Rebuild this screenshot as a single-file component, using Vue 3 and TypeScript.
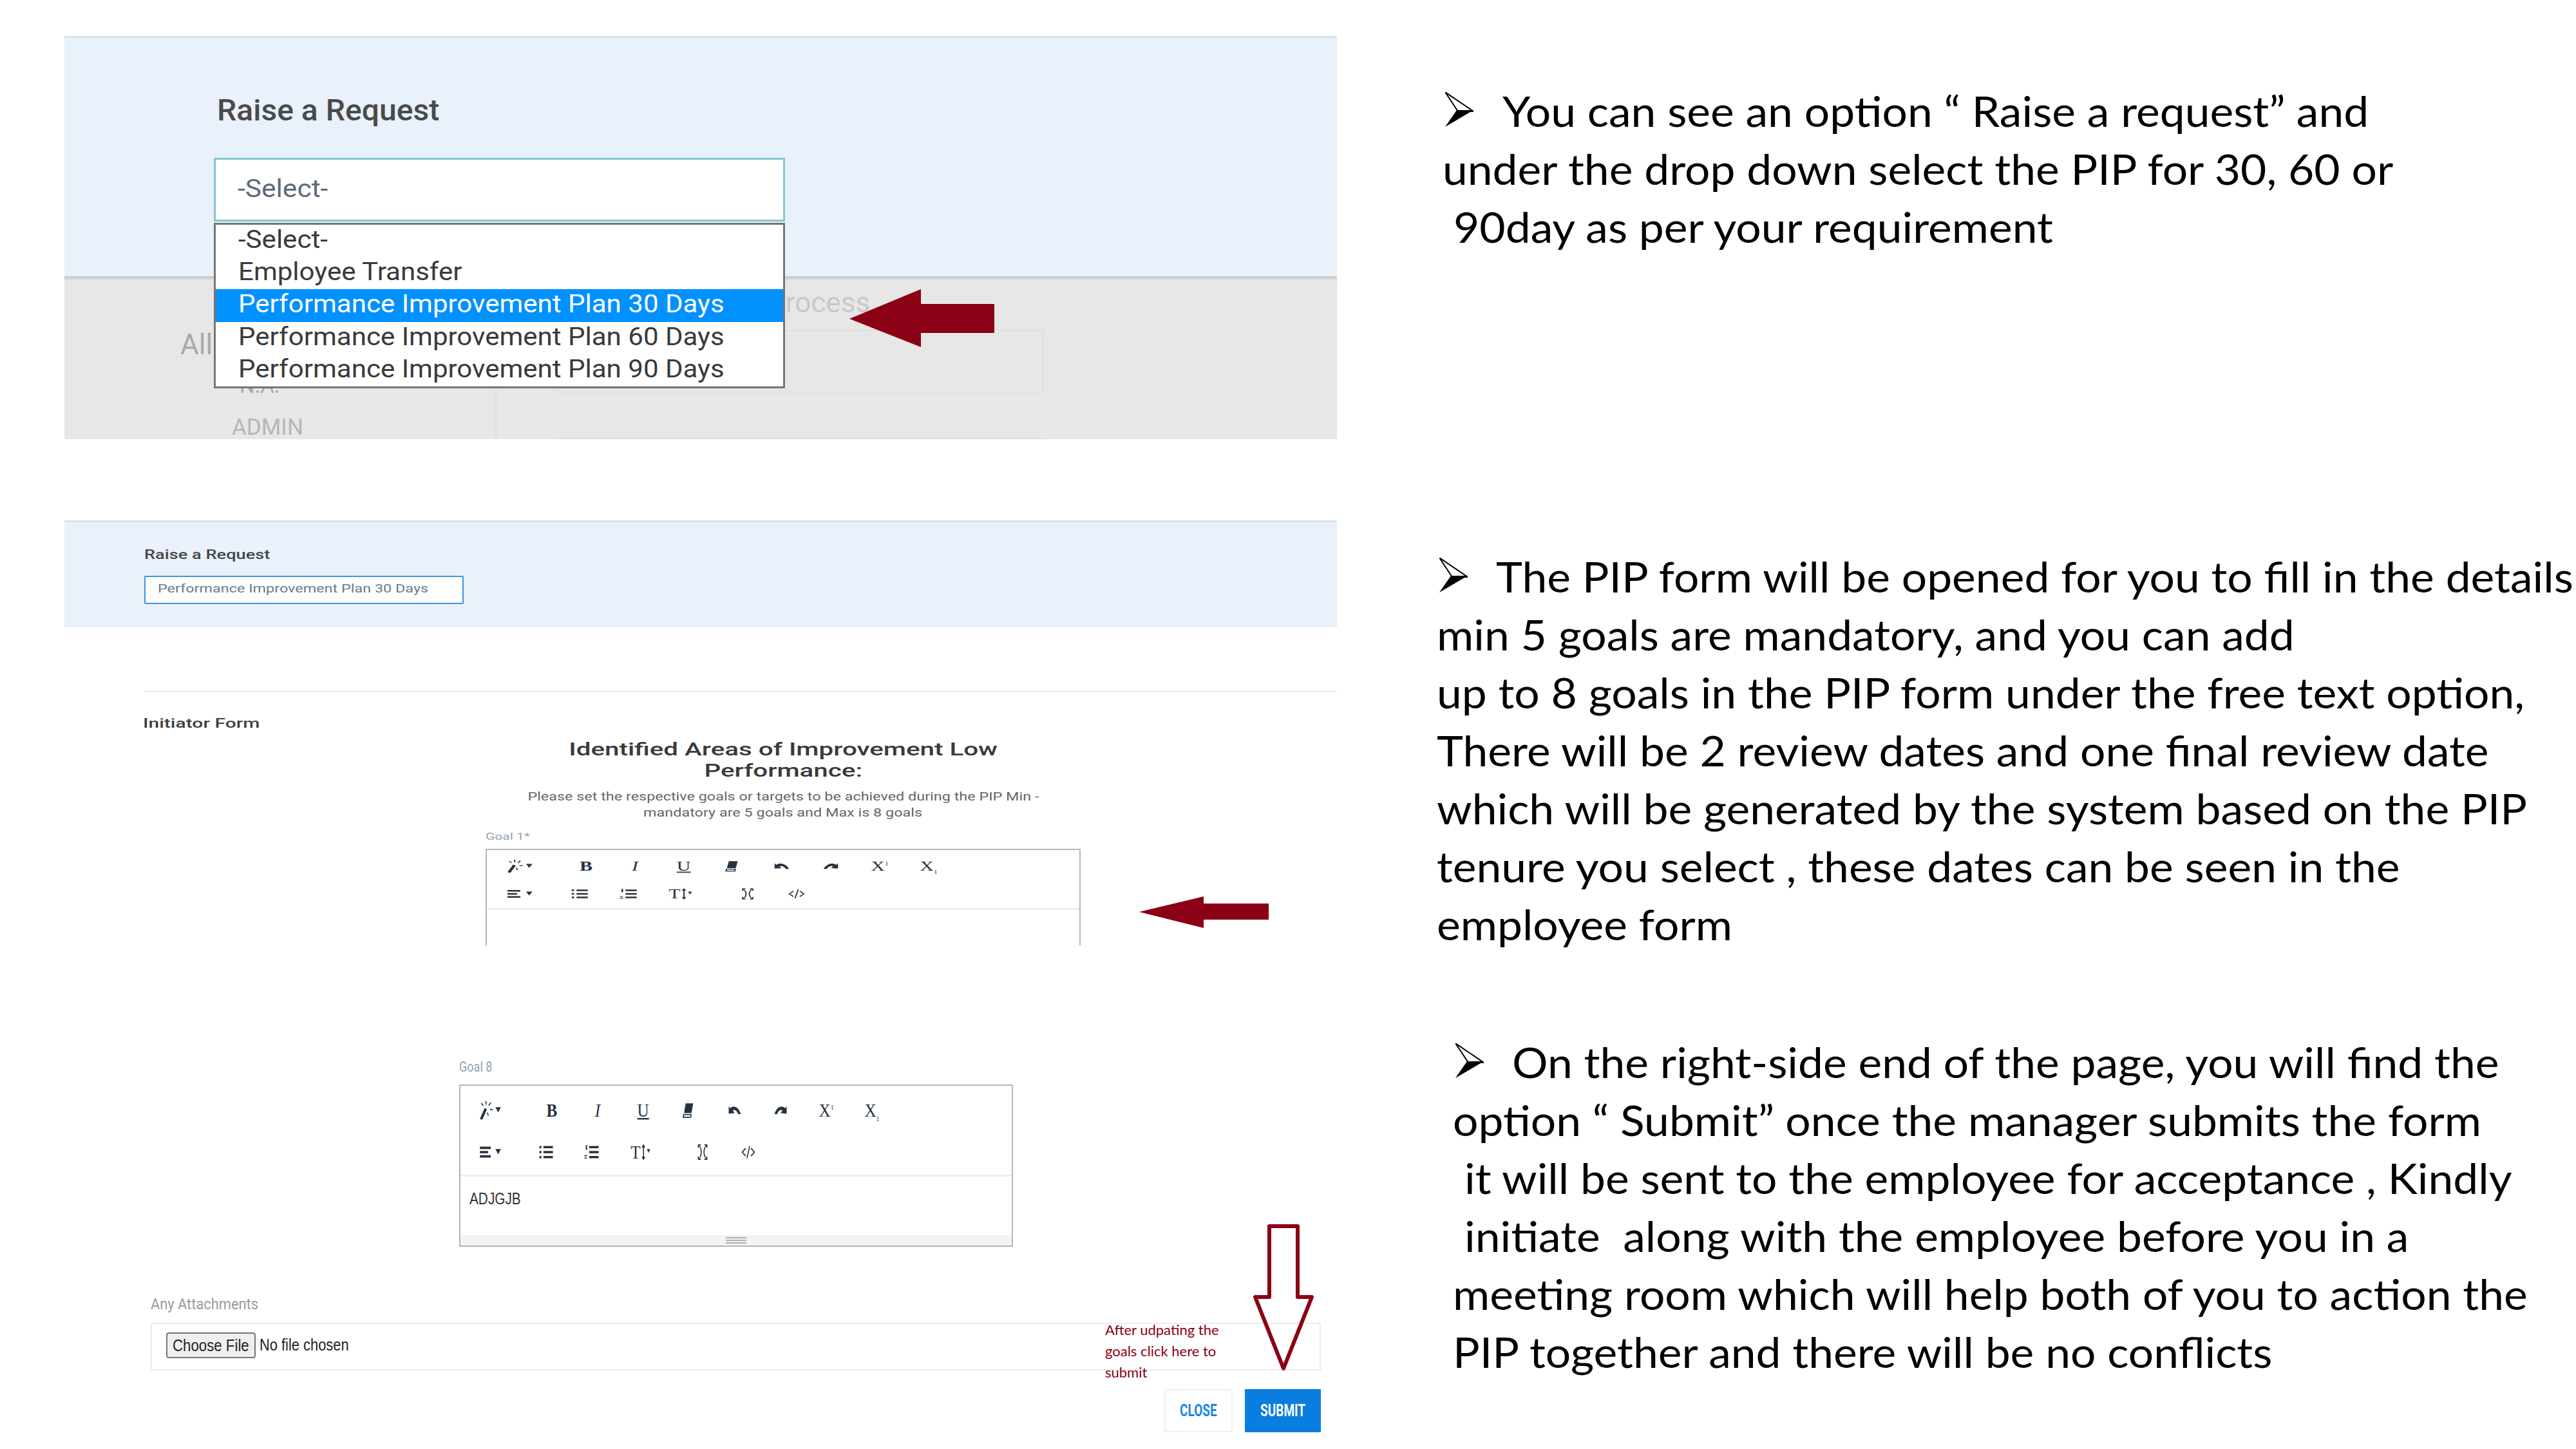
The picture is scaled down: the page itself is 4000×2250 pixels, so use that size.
<template>
  <div class="slide">
    <div class="left">
      <!-- first capture: dropdown open -->
      <section class="shot-select">
        <div class="req-head">
          <div class="req-title"><span class="sx">Raise a Request</span></div>
          <div class="select-box"><span class="sx">-Select-</span></div>
        </div>
        <div class="req-body">
          <div class="body-col">
            <div class="all-label">All</div>
            <div class="na-label">N.A.</div>
            <div class="admin-label">ADMIN</div>
          </div>
          <div class="body-main">
            <div class="process-label">Process</div>
            <div class="ghost-box"></div>
            <div class="ghost-box second"></div>
          </div>
        </div>
        <ul class="options">
          <li v-for="opt in options" :key="opt" :class="{ active: opt === selected }">
            <span class="sx">{{ opt }}</span>
          </li>
        </ul>
      </section>

      <!-- second capture: the form -->
      <section class="shot-form">
        <div class="banner">
          <div class="banner-title"><span class="sx">Raise a Request</span></div>
          <div class="banner-input"><span class="sx">{{ selected }}</span></div>
        </div>
        <div class="form-rule"></div>
        <div class="form-label"><span class="sx">Initiator Form</span></div>

        <div class="goal-head">
          <h2><span class="sx">Identified Areas of Improvement Low</span><br /><span class="sx">Performance:</span></h2>
          <p>
            <span class="sx">Please set the respective goals or targets to be achieved during the PIP Min -</span><br />
            <span class="sx">mandatory are 5 goals and Max is 8 goals</span>
          </p>
        </div>

        <div class="goal goal-one">
          <div class="goal-label"><span class="sx">Goal 1*</span></div>
          <div class="editor">
            <div class="toolbar">
              <div v-for="(row, r) in toolbar" :key="r" class="tool-row">
                <div
                  v-for="(tool, i) in row"
                  :key="i"
                  class="tool"
                  :style="{ '--gap': tool.gap ?? 0 }"
                >
                  <div class="tool-in">
                    <span v-if="tool.text" class="glyph" :class="tool.cls">{{ tool.text }}<sup v-if="tool.sup">1</sup><sub v-if="tool.sub">1</sub></span>
                    <svg v-if="tool.fill || tool.line" :viewBox="tool.view ?? '0 0 30 24'" :width="tool.w ?? 30" height="24">
                      <path v-if="tool.fill" :d="tool.fill" fill="#25323f" />
                      <path v-if="tool.line" :d="tool.line" fill="none" stroke="#25323f" stroke-width="1.5" />
                    </svg>
                  </div>
                </div>
              </div>
            </div>
          </div>
        </div>

        <div class="goal goal-eight">
          <div class="goal-label"><span class="sx">Goal 8</span></div>
          <div class="editor">
            <div class="toolbar">
              <div v-for="(row, r) in toolbar" :key="r" class="tool-row">
                <div
                  v-for="(tool, i) in row"
                  :key="i"
                  class="tool"
                  :style="{ '--gap': tool.gap ?? 0 }"
                >
                  <div class="tool-in">
                    <span v-if="tool.text" class="glyph" :class="tool.cls">{{ tool.text }}<sup v-if="tool.sup">1</sup><sub v-if="tool.sub">1</sub></span>
                    <svg v-if="tool.fill || tool.line" :viewBox="tool.view ?? '0 0 30 24'" :width="tool.w ?? 30" height="24">
                      <path v-if="tool.fill" :d="tool.fill" fill="#25323f" />
                      <path v-if="tool.line" :d="tool.line" fill="none" stroke="#25323f" stroke-width="1.5" />
                    </svg>
                  </div>
                </div>
              </div>
            </div>
            <div class="editor-text"><span class="sx">ADJGJB</span></div>
            <div class="resize-bar"><div class="grip"></div></div>
          </div>
        </div>

        <div class="attach-label"><span class="sx">Any Attachments</span></div>
        <div class="attach-box">
          <button class="file-btn" type="button"><span class="sx">Choose File</span></button>
          <span class="file-name"><span class="sx">No file chosen</span></span>
          <div class="red-note">
            <div v-for="line in noteLines" :key="line"><span class="sx">{{ line }}</span></div>
          </div>
        </div>
        <div class="actions">
          <button class="btn-close" type="button"><span class="sx">CLOSE</span></button>
          <button class="btn-submit" type="button"><span class="sx">SUBMIT</span></button>
        </div>
      </section>
    </div>

    <!-- explanation text -->
    <div class="right">
      <div v-for="block in notes" :key="block.id" class="note" :class="block.id">
        <div
          v-for="(line, i) in block.lines"
          :key="i"
          class="note-line"
          :style="{ paddingLeft: line.indent + 'px' }"
        >
          <svg v-if="i === 0" class="bullet" viewBox="0 0 44 54" width="44" height="54">
            <path d="M0 0 44 30 20 30z" fill="#fff" stroke="#000" stroke-width="2" />
            <path d="M44 28 0 54 18 28z" fill="#000" />
          </svg>
          <span class="sx">{{ line.text }}</span>
        </div>
      </div>
    </div>

    <svg class="arrow arrow-one" viewBox="0 0 225 90" width="225" height="90">
      <path d="M0 46 111 0V23H225V68H111V90z" fill="#8a0015" />
    </svg>
    <svg class="arrow arrow-two" viewBox="0 0 201 49" width="201" height="49">
      <path d="M0 24 100 0V11H201V36H100V49z" fill="#8a0015" />
    </svg>
    <svg class="arrow arrow-down" viewBox="0 0 96 228" width="96" height="228">
      <path
        d="M26 3H70V113H92L48 224 4 113H26z"
        fill="none"
        stroke="#8a0015"
        stroke-width="6"
        stroke-linejoin="round"
      />
    </svg>
  </div>
</template>

<script setup lang="ts">
interface Tool {
  text?: string
  cls?: string
  sup?: boolean
  sub?: boolean
  fill?: string
  line?: string
  view?: string
  w?: number
  gap?: number
}

interface NoteBlock {
  id: string
  lines: { text: string; indent: number }[]
}

const selected = 'Performance Improvement Plan 30 Days'

const options = [
  '-Select-',
  'Employee Transfer',
  selected,
  'Performance Improvement Plan 60 Days',
  'Performance Improvement Plan 90 Days'
]

const noteLines = ['After udpating the', 'goals click here to', 'submit']

// rows of the rich text editor, gap = extra space before a button in cell widths
const toolbar: Tool[][] = [
  [
    {
      fill: 'M1 23l7-14 3.4 1.7-7 14zM24 8h8l-4 7z',
      line: 'M10 0v5M3 3l3 3M17 2l-3 4M20 11h-4M12 15l1.5 4',
      view: '0 0 34 24',
      w: 34
    },
    { text: 'B', cls: 'bold', gap: 0.34 },
    { text: 'I', cls: 'ital' },
    { text: 'U', cls: 'under' },
    { fill: 'M10 3h11l-2.4 12.5h-11z', line: 'M7 17.5h11l-.6 3.5h-11z' },
    { fill: 'M8 9.5C13 5 20 7 24 17H20C18 12 14 10.5 12 12.5L15 15.5 6 16.5V6.5z' },
    { fill: 'M22 9.5C17 5 10 7 6 17H10C12 12 16 10.5 18 12.5L15 15.5 24 16.5V6.5z' },
    { text: 'X', sup: true },
    { text: 'X', sub: true }
  ],
  [
    { fill: 'M1 5h16v3H1zM1 10.5h12v3H1zM1 16h16v3H1zM24 8h8l-4 7z', view: '0 0 34 24', w: 34 },
    { fill: 'M6 4h3v3H6zM6 10.5h3v3H6zM6 17h3v3H6zM12 4h14v3H12zM12 10.5h14v3H12zM12 17h14v3H12z', gap: 0.2 },
    { fill: 'M12 4h14v3H12zM12 10.5h14v3H12zM12 17h14v3H12zM7 3h2v6H7zM5 16h4v1.4H5zM5 19h4v1.4H5z' },
    { text: 'T', fill: 'M24 8h5l-2.5 5z', line: 'M19 3v18M17 6l2-3 2 3M17 18l2 3 2-3', view: '15 0 15 24', w: 15, gap: 0.08 },
    {
      fill: 'M8 2h5l-5 5zM22 2h-5l5 5zM8 22h5l-5-5zM22 22h-5l5-5z',
      line: 'M11 5q4 7 0 14M19 5q-4 7 0 14',
      gap: 0.36
    },
    { line: 'M11 7l-5 5 5 5M19 7l5 5-5 5M17 4l-4 16' }
  ]
]

const notes: NoteBlock[] = [
  {
    id: 'note-a',
    lines: [
      { text: 'You can see an option “ Raise a request” and', indent: 93 },
      { text: 'under the drop down select the PIP for 30, 60 or', indent: 0 },
      { text: '90day as per your requirement', indent: 17 }
    ]
  },
  {
    id: 'note-b',
    lines: [
      { text: 'The PIP form will be opened for you to fill in the details', indent: 92 },
      { text: 'min 5 goals are mandatory, and you can add', indent: 0 },
      { text: 'up to 8 goals in the PIP form under the free text option,', indent: 0 },
      { text: 'There will be 2 review dates and one final review date', indent: 0 },
      { text: 'which will be generated by the system based on the PIP', indent: 0 },
      { text: 'tenure you select , these dates can be seen in the', indent: 0 },
      { text: 'employee form', indent: 0 }
    ]
  },
  {
    id: 'note-c',
    lines: [
      { text: 'On the right-side end of the page, you will find the', indent: 92 },
      { text: 'option “ Submit” once the manager submits the form', indent: 0 },
      { text: 'it will be sent to the employee for acceptance , Kindly', indent: 18 },
      { text: 'initiate  along with the employee before you in a', indent: 18 },
      { text: 'meeting room which will help both of you to action the', indent: 0 },
      { text: 'PIP together and there will be no conflicts', indent: 0 }
    ]
  }
]
</script>

<style scoped>
.slide {
  position: relative;
  display: flex;
  width: 4000px;
  height: 2250px;
  overflow: hidden;
  background: #fff;
  font-family: Roboto, "Liberation Sans", sans-serif;
}

.sx {
  display: inline-block;
  white-space: pre;
  transform-origin: left center;
  transform: scaleX(var(--sx, 1));
}

.left {
  flex: none;
  width: 1976px;
  margin-left: 100px;
  padding-top: 56px;
}

/* first capture */
.shot-select {
  position: relative;
  height: 626px;
}

.req-head {
  height: 373px;
  padding: 87px 0 0 232px;
  box-sizing: border-box;
  background: #e9f1fa;
  border-top: 3px solid #d9e0e7;
}

.req-title {
  height: 50px;
  margin: 0 0 49px 5px;
  font-size: 46px;
  line-height: 50px;
  font-weight: 500;
  color: #4a4a4a;
  --sx: 1.045;
}

.select-box {
  width: 887px;
  height: 99px;
  box-sizing: border-box;
  padding-left: 34px;
  border: 3px solid #84c6d3;
  background: #fff;
  font-size: 39px;
  line-height: 90px;
  color: #5d6b78;
  --sx: 1.09;
}

.req-body {
  display: flex;
  height: 253px;
  background: #e7e7e7;
  box-shadow: inset 0 7px 4px -3px #c8c8c8;
}

.body-col {
  width: 671px;
  box-sizing: border-box;
  border-right: 2px solid #dedede;
  padding: 84px 0 0 180px;
  color: #a9a9a9;
}

.all-label {
  font-size: 44px;
  line-height: 44px;
}

.na-label {
  margin: 27px 0 0 92px;
  font-size: 33px;
  line-height: 30px;
}

.admin-label {
  margin: 31px 0 0 80px;
  font-size: 35px;
  line-height: 38px;
  color: #b6b6b6;
}

.body-main {
  padding: 21px 0 0 90px;
}

.process-label {
  margin-left: 331px;
  height: 41px;
  font-size: 44px;
  line-height: 41px;
  color: #c9c9c9;
}

.ghost-box {
  width: 760px;
  height: 98px;
  margin-top: 21px;
  box-sizing: border-box;
  border: 2px solid #e0e0e0;
}

.ghost-box.second {
  height: 10px;
  margin-top: 70px;
  border-width: 2px 0 0;
}

.options {
  position: absolute;
  top: 290px;
  left: 232px;
  width: 887px;
  height: 257px;
  margin: 0;
  padding: 0;
  box-sizing: border-box;
  list-style: none;
  background: #fff;
  border: 3px solid #767676;
  font-size: 39px;
  color: #3a3a3a;
  --sx: 1.078;
}

.options li {
  height: 50.2px;
  padding-left: 35px;
  line-height: 46px;
}

.options li.active {
  background: #0091ff;
  color: #fff;
}

/* second capture */
.shot-form {
  margin-top: 126px;
}

.banner {
  height: 166px;
  padding: 35px 0 0 124px;
  box-sizing: border-box;
  background: #e9f1fa;
  border-top: 3px solid #d9e0e7;
}

.banner-title {
  height: 30px;
  font-size: 20px;
  line-height: 30px;
  font-weight: 500;
  color: #474747;
  --sx: 1.36;
}

.banner-input {
  width: 496px;
  height: 44px;
  margin-top: 18px;
  padding-left: 19px;
  box-sizing: border-box;
  background: #fff;
  border: 2px solid #3d95e0;
  border-radius: 2px;
  font-size: 18px;
  line-height: 35px;
  color: #6c7a88;
  --sx: 1.3;
}

.form-rule {
  height: 2px;
  margin: 99px 0 0 124px;
  background: #eeeeee;
}

.form-label {
  height: 26px;
  margin: 35px 0 0 122px;
  font-size: 21px;
  line-height: 26px;
  font-weight: 500;
  color: #3f3f3f;
  --sx: 1.43;
}

.goal-head {
  width: 924px;
  margin: 11px 0 0 654px;
  text-align: center;
}

.goal-head h2 {
  margin: 0;
  font-size: 28px;
  line-height: 33px;
  font-weight: 500;
  color: #3a3a3a;
  --sx: 1.44;
}

.goal-head p {
  margin: 11px 0 0;
  font-size: 18px;
  line-height: 25px;
  color: #666;
  --sx: 1.3;
}

.goal-head .sx {
  transform-origin: center;
}

.goal-label {
  height: 20px;
  font-size: 15px;
  line-height: 20px;
  color: #8fa3b5;
  --sx: 1.4;
}

.goal-one {
  width: 924px;
  margin: 15px 0 0 654px;
}

.goal-eight {
  width: 860px;
  margin: 179px 0 0 613px;
}

.goal-eight .goal-label {
  font-size: 22px;
  --sx: 0.82;
}

.editor {
  box-sizing: border-box;
  border: 2px solid #b5b5b5;
}

.goal-one .editor {
  height: 150px;
  margin-top: 9px;
  border-bottom: 0;
  --cell: 76px;
  --gx: 1.25;
  --gy: 0.85;
}

.goal-eight .editor {
  height: 252px;
  margin-top: 17px;
  --cell: 71px;
  --gx: 1.05;
  --gy: 1.2;
}

.toolbar {
  display: flex;
  flex-direction: column;
  box-sizing: border-box;
  border-bottom: 3px solid #ededed;
}

.goal-one .toolbar {
  height: 93px;
  padding: 5px 0 0 14px;
  gap: 3px;
}

.goal-eight .toolbar {
  height: 141px;
  padding: 10px 0 0 11px;
  gap: 9px;
}

.tool-row {
  display: flex;
}

.goal-one .tool-row {
  height: 40px;
}

.goal-eight .tool-row {
  height: 56px;
}

.tool {
  display: flex;
  align-items: center;
  justify-content: center;
  flex: none;
  width: var(--cell);
  margin-left: calc(var(--cell) * var(--gap));
}

.tool-in {
  display: flex;
  align-items: center;
  transform: scale(var(--gx), var(--gy));
}

.glyph {
  position: relative;
  font-family: "Liberation Serif", serif;
  font-size: 24px;
  line-height: 24px;
  color: #25323f;
}

.glyph.bold {
  font-weight: 700;
}

.glyph.ital {
  font-style: italic;
}

.glyph.under {
  text-decoration: underline;
}

.glyph sup,
.glyph sub {
  font-size: 9px;
  line-height: 0;
}

.editor-text {
  height: 91px;
  padding: 19px 0 0 14px;
  box-sizing: border-box;
  font-family: "Liberation Sans", sans-serif;
  font-size: 26px;
  line-height: 30px;
  color: #333;
  --sx: 0.8;
}

.resize-bar {
  display: flex;
  justify-content: center;
  align-items: center;
  height: 16px;
  background: #f2f2f2;
}

.grip {
  width: 32px;
  height: 10px;
  background: repeating-linear-gradient(#b0b0b0 0 2px, transparent 2px 4px);
}

.attach-label {
  height: 24px;
  margin: 77px 0 0 134px;
  font-size: 24px;
  line-height: 24px;
  color: #9a9a9a;
  --sx: 0.91;
}

.attach-box {
  position: relative;
  display: flex;
  align-items: center;
  width: 1817px;
  height: 74px;
  margin: 17px 0 0 134px;
  padding: 0 0 5px 22px;
  box-sizing: border-box;
  border: 2px solid #ececec;
}

.file-btn {
  width: 139px;
  height: 40px;
  padding: 0 0 0 8px;
  box-sizing: border-box;
  background: #efefef;
  border: 2px solid #767676;
  border-radius: 4px;
  font-family: "Liberation Sans", sans-serif;
  font-size: 25px;
  line-height: 34px;
  color: #222;
  text-align: left;
  --sx: 0.89;
}

.file-name {
  margin-left: 6px;
  font-family: "Liberation Sans", sans-serif;
  font-size: 25px;
  color: #222;
  --sx: 0.875;
}

.red-note {
  position: absolute;
  top: -8px;
  left: 1480px;
  font-family: Lato, sans-serif;
  font-size: 22px;
  line-height: 33px;
  color: #8a0015;
  --sx: 1;
}

.actions {
  display: flex;
  justify-content: flex-end;
  gap: 19px;
  width: 1817px;
  margin: 29px 0 0 134px;
}

.actions button {
  height: 67px;
  padding: 0;
  font-family: Roboto, sans-serif;
  font-size: 25px;
  font-weight: 700;
  --sx: 0.76;
}

.actions .sx {
  transform-origin: center;
}

.btn-close {
  width: 106px;
  background: #fff;
  border: 2px solid #eeeeee;
  color: #1a85e0;
}

.btn-submit {
  width: 118px;
  background: #0a7ee0;
  border: 0;
  color: #fff;
}

/* explanation text */
.right {
  flex: none;
  margin-left: 155px;
  padding-top: 127px;
  font-family: Lato, "Open Sans", sans-serif;
  font-size: 65px;
  line-height: 90px;
  color: #000;
  --sx: 1.07;
}

.note-a {
  padding-left: 9px;
}

.note-b {
  margin-top: 453px;
}

.note-c {
  margin-top: 124px;
  padding-left: 25px;
}

.note-line {
  position: relative;
  height: 90px;
}

.bullet {
  position: absolute;
  top: 16px;
  left: 4px;
}

.arrow {
  position: absolute;
}

.arrow-one {
  left: 1319px;
  top: 449px;
}

.arrow-two {
  left: 1769px;
  top: 1392px;
}

.arrow-down {
  left: 1945px;
  top: 1901px;
}
</style>
